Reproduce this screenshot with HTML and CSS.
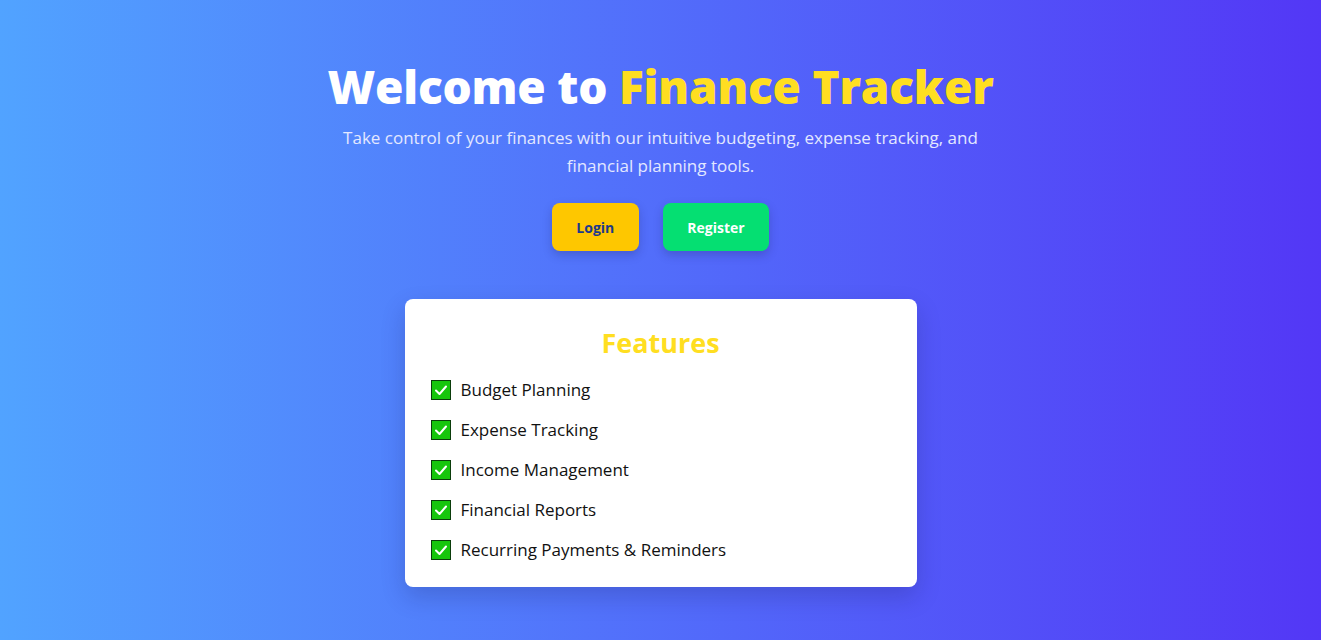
FILE: index.html
```html
<!DOCTYPE html>
<html lang="en">
<head>
<meta charset="utf-8">
<title>Finance Tracker</title>
<link rel="stylesheet" href="styles.css">
</head>
<body>
<main class="hero">
  <h1 class="title">Welcome to <span class="accent">Finance Tracker</span></h1>
  <p class="subtitle">Take control of your finances with our intuitive budgeting, expense tracking, and financial planning tools.</p>
  <div class="actions">
    <a class="btn btn-login" href="#">Login</a>
    <a class="btn btn-register" href="#">Register</a>
  </div>
  <section class="card">
    <h2 class="card-title">Features</h2>
    <ul class="features">
      <li><svg class="check" viewBox="0 0 20 20" aria-hidden="true"><rect x="0.5" y="0.5" width="19" height="19" fill="#16c60c" stroke="#0b3d0b"/><path d="M5 10.5 L8.5 14 L15 6.5" fill="none" stroke="#fff" stroke-width="2" stroke-linecap="round" stroke-linejoin="round"/></svg>Budget Planning</li>
      <li><svg class="check" viewBox="0 0 20 20" aria-hidden="true"><rect x="0.5" y="0.5" width="19" height="19" fill="#16c60c" stroke="#0b3d0b"/><path d="M5 10.5 L8.5 14 L15 6.5" fill="none" stroke="#fff" stroke-width="2" stroke-linecap="round" stroke-linejoin="round"/></svg>Expense Tracking</li>
      <li><svg class="check" viewBox="0 0 20 20" aria-hidden="true"><rect x="0.5" y="0.5" width="19" height="19" fill="#16c60c" stroke="#0b3d0b"/><path d="M5 10.5 L8.5 14 L15 6.5" fill="none" stroke="#fff" stroke-width="2" stroke-linecap="round" stroke-linejoin="round"/></svg>Income Management</li>
      <li><svg class="check" viewBox="0 0 20 20" aria-hidden="true"><rect x="0.5" y="0.5" width="19" height="19" fill="#16c60c" stroke="#0b3d0b"/><path d="M5 10.5 L8.5 14 L15 6.5" fill="none" stroke="#fff" stroke-width="2" stroke-linecap="round" stroke-linejoin="round"/></svg>Financial Reports</li>
      <li><svg class="check" viewBox="0 0 20 20" aria-hidden="true"><rect x="0.5" y="0.5" width="19" height="19" fill="#16c60c" stroke="#0b3d0b"/><path d="M5 10.5 L8.5 14 L15 6.5" fill="none" stroke="#fff" stroke-width="2" stroke-linecap="round" stroke-linejoin="round"/></svg>Recurring Payments &amp; Reminders</li>
    </ul>
  </section>
</main>
</body>
</html>
```
FILE: styles.css
```css
* { box-sizing: border-box; }
html, body { margin: 0; height: 100%; }
body {
  font-family: "Open Sans", "Noto Sans", sans-serif;
  background: linear-gradient(to right, #51a3ff, #5337f6);
  color: #111;
  overflow: hidden;
}
.hero {
  display: flex;
  flex-direction: column;
  align-items: center;
  padding-top: 56px;
  text-align: center;
}
.title {
  margin: 0;
  font-size: 46px;
  font-weight: 800;
  line-height: 60px;
  color: #fff;
  letter-spacing: -0.22px;
}
.accent { color: #ffde21; }
.subtitle {
  margin: 8px 0 0;
  max-width: 672px;
  font-size: 17px;
  line-height: 28px;
  color: #e3e8ff;
}
.actions {
  display: flex;
  gap: 24px;
  margin-top: 23px;
}
.btn {
  display: flex;
  align-items: center;
  justify-content: center;
  height: 48px;
  padding: 0 24.5px;
  border-radius: 8px;
  font-size: 14px;
  font-weight: 700;
  text-decoration: none;
  box-shadow: 0 4px 10px rgba(30, 30, 90, 0.25);
}
.btn-login { background: #fec700; color: #1e3a8a; }
.btn-register { background: #05df72; color: #fff; }
.card {
  margin-top: 48px;
  width: 512px;
  background: #fff;
  border-radius: 8px;
  padding: 24px 26px 23px;
  box-shadow: 0 10px 25px rgba(20, 20, 80, 0.2);
  text-align: left;
}
.card-title {
  margin: 0 0 13px;
  text-align: center;
  font-size: 27px;
  font-weight: 700;
  line-height: 40px;
  color: #ffde21;
}
.features {
  list-style: none;
  margin: 0;
  padding: 0;
  display: flex;
  flex-direction: column;
  gap: 12px;
}
.features li {
  display: flex;
  align-items: center;
  gap: 10px;
  font-size: 17px;
  line-height: 28px;
  color: #111;
}
.check { width: 20px; height: 20px; flex: none; }
```
